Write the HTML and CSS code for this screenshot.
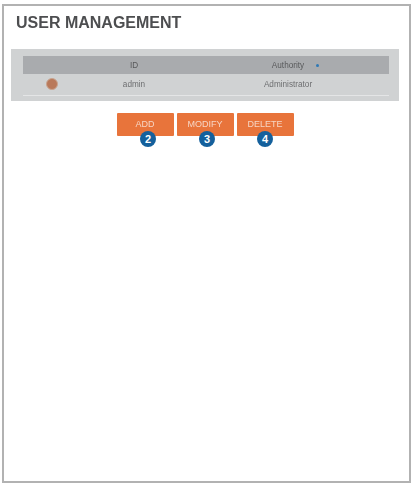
FILE: index.html
```html
<!DOCTYPE html>
<html lang="en">
<head>
    <meta charset="UTF-8">
    <meta name="viewport" content="width=device-width, initial-scale=1.0">
    <title>User Management</title>
    <link rel="stylesheet" href="styles.css">
</head>
<body>

    <div class="frame">
        <h2>USER MANAGEMENT</h2>

        <div class="panel">
            <div class="row head">
                <span class="col-check"></span>
                <span class="col-id">ID</span>
                <span class="col-auth"><span class="sort">Authority<i class="sort-dot"></i></span></span>
            </div>
            <div class="row">
                <span class="col-check"><i class="radio"></i></span>
                <span class="col-id">admin</span>
                <span class="col-auth">Administrator</span>
            </div>
        </div>

        <div class="actions">
            <button class="btn"><span class="label">ADD</span><span class="badge badge-add">2</span></button>
            <button class="btn"><span class="label">MODIFY</span><span class="badge badge-modify">3</span></button>
            <button class="btn"><span class="label">DELETE</span><span class="badge">4</span></button>
        </div>
    </div>

</body>
</html>
```

FILE: styles.css
```css
body {
    margin: 0;
    background: #fff;
    font-family: 'Liberation Sans', Arial, sans-serif;
    color: #555;
}

.frame {
    box-sizing: border-box;
    width: 409px;
    height: 479px;
    margin: 4px 0 0 2px;
    padding: 7px 8px 0 7px;
    border: 2px solid #b2b2b2;
}

h2 {
    margin: 0 0 16px 5px;
    font-size: 16px;
    line-height: 20px;
    font-weight: bold;
    color: #4d4e50;
    filter: blur(0.4px);
}

.panel {
    width: 388px;
    box-sizing: border-box;
    padding: 7px 10px 5px 12px;
    background: #d0d2d3;
}

.row {
    display: flex;
    align-items: center;
    height: 21px;
    font-size: 8.2px;
    text-align: center;
    color: #6d6e70;
    border-bottom: 1px solid #e4e5e6;
}

.head {
    height: 18px;
    background: #a9abae;
    border-bottom: 0;
    color: #58595b;
}

.col-check {
    width: 58px;
    display: flex;
    justify-content: center;
}

.col-id {
    width: 106px;
    filter: blur(0.4px);
}

.col-auth {
    flex: 1;
    filter: blur(0.4px);
}

.radio {
    width: 12px;
    height: 12px;
    margin-top: -1px;
    border-radius: 50%;
    background: #b9795a;
    border: 1px solid #c9a48f;
    box-sizing: border-box;
}

.sort {
    position: relative;
}

.sort-dot {
    position: absolute;
    right: -15px;
    top: 3px;
    width: 3px;
    height: 3px;
    border-radius: 50%;
    background: #2f78b5;
}

.actions {
    display: flex;
    justify-content: center;
    gap: 3px;
    margin-top: 12px;
    padding-right: 2px;
}

.btn {
    position: relative;
    width: 57px;
    height: 23px;
    padding: 0 0 1px;
    border: 0;
    border-radius: 1px;
    background: #e8743b;
    color: #f6d5c4;
    font-family: inherit;
    font-size: 9px;
}

.label {
    display: inline-block;
    filter: blur(0.4px);
}

.badge {
    position: absolute;
    left: 50%;
    top: 18px;
    width: 16px;
    height: 16px;
    margin-left: -8px;
    border-radius: 50%;
    background: #14609c;
    color: #fff;
    font-size: 11px;
    font-weight: bold;
    line-height: 16px;
    text-align: center;
}

.badge-add {
    margin-left: -5px;
}

.badge-modify {
    margin-left: -6px;
}
```
